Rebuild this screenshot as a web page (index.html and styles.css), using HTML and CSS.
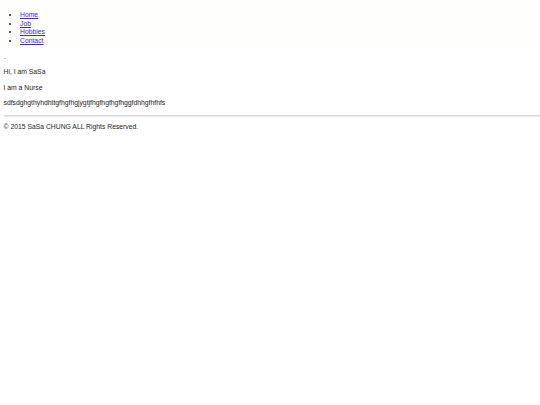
FILE: index.html
```html
<!DOCTYPE html>
<html>
<head>
<meta charset="utf-8">
<link rel="stylesheet" href="styles.css">
</head>
<body>
<header class="top">
  <ul class="nav">
    <li><a href="#">Home</a></li>
    <li><a href="#">Job</a></li>
    <li><a href="#">Hobbies</a></li>
    <li><a href="#">Contact</a></li>
  </ul>
</header>
<div class="pic"><span class="mark"></span></div>
<main>
  <p>Hi, I am SaSa</p>
  <p>I am a Nurse</p>
  <p>sdfsdghgthyhdhttgfhgfhgjygtjfhgfhgfhgfhggfdhhgfhfhfs</p>
</main>
<hr class="rule">
<footer>
  <p class="copy">© 2015 SaSa CHUNG ALL Rights Reserved.</p>
</footer>
</body>
</html>
```

FILE: styles.css
```css
html { background: #fff; }
body {
  margin: 0;
  padding: 3.5px;
  font-family: "Liberation Sans", Arial, sans-serif;
  font-size: 6.8px;
  line-height: 8.7px;
  color: #222;
}
.top {
  background: #fefefc;
  margin: -3.5px -3.5px 0;
  padding: 11px 3.5px 3px;
}
.nav {
  margin: 0;
  padding-left: 16.5px;
}
.nav a { color: #3a2bc8; }
.pic {
  box-sizing: border-box;
  height: 6px;
  padding-top: 2px;
  margin-top: 6px;
  display: flex;
  align-items: center;
}
.mark {
  display: block;
  width: 2px;
  height: 1px;
  background: #c8c8c8;
}
p { margin: 7px 0; }
.rule {
  margin: 5px -3.5px 0 0;
  border: 0;
  border-top: 1px solid #d8d8d8;
  border-bottom: 1px solid #ececec;
}
.copy { margin-top: 6px; }
```
